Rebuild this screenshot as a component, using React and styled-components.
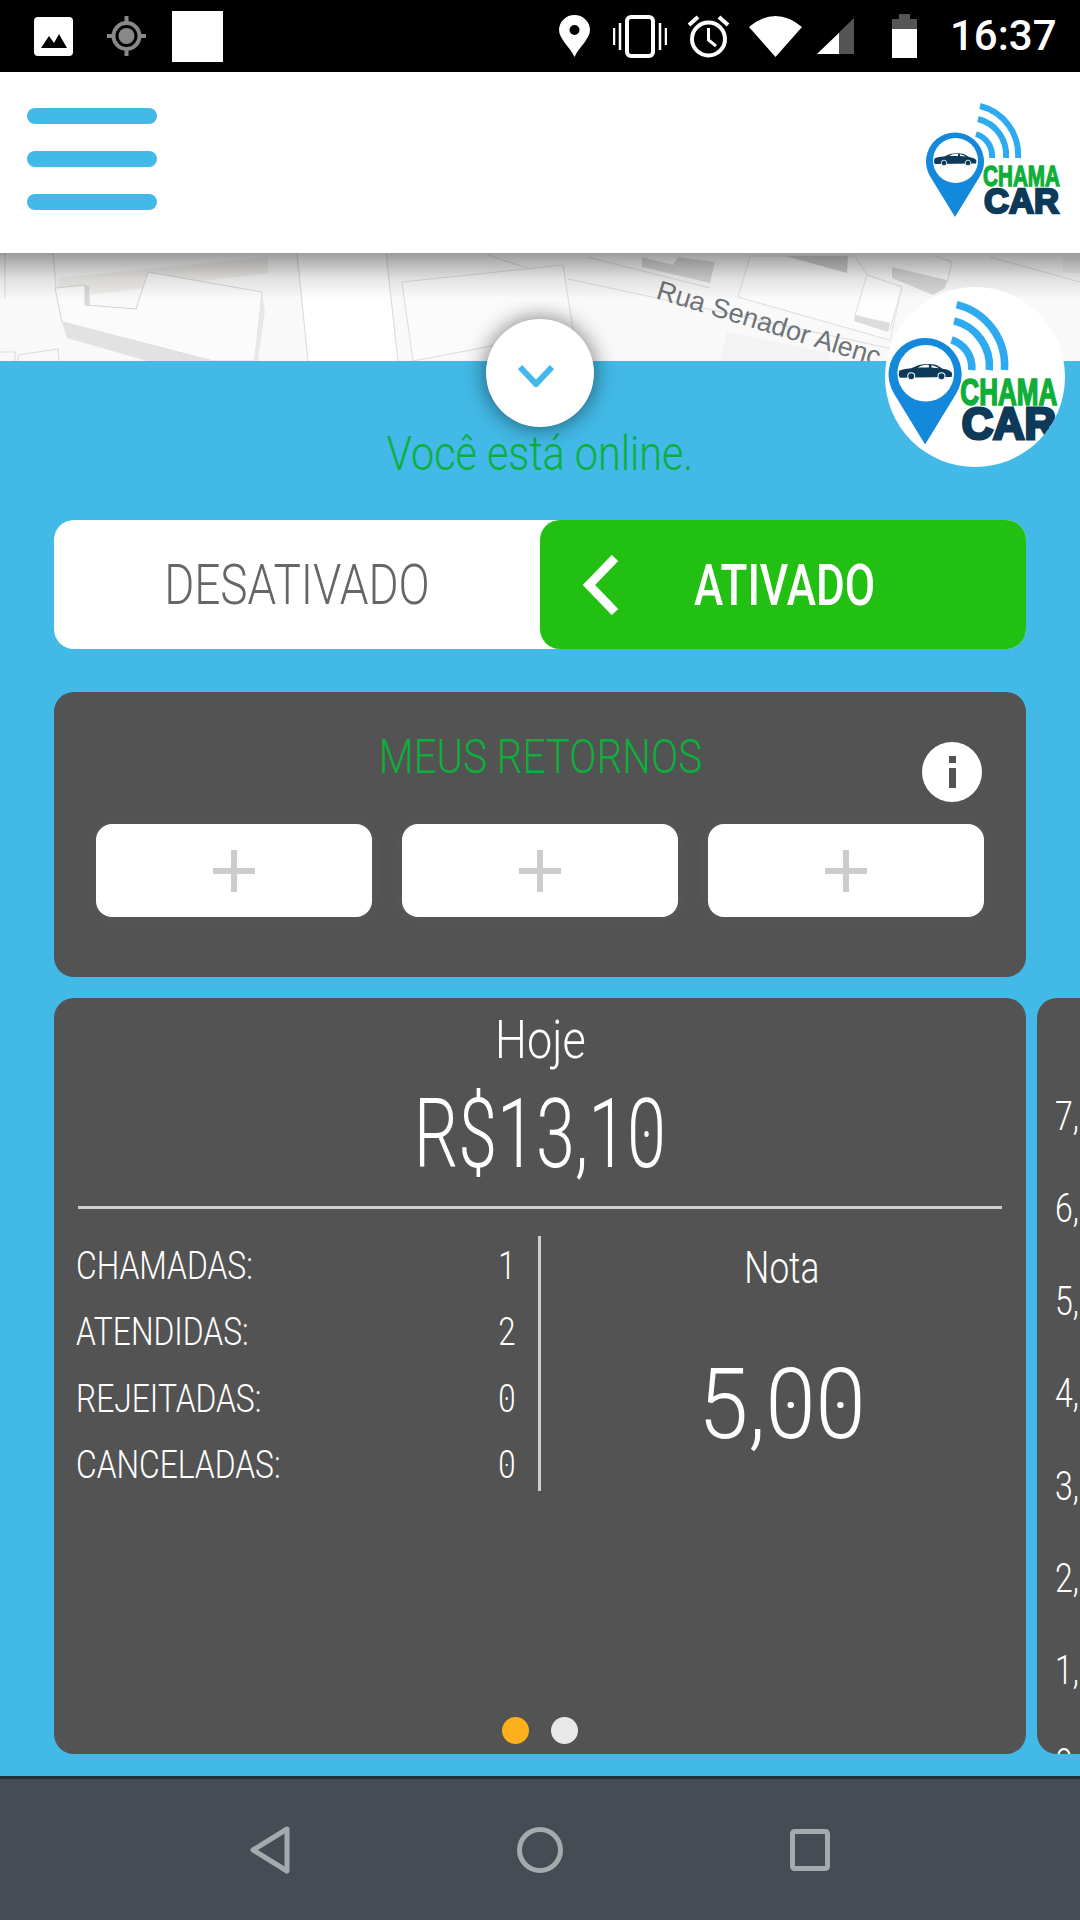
import React from "react";
import styled, { createGlobalStyle } from "styled-components";

const GlobalStyle = createGlobalStyle`
  html, body {
    margin: 0;
    padding: 0;
    background: #42b9e6;
    overflow: hidden;
  }
  * { box-sizing: border-box; }
`;

const Page = styled.div`
  width: 1080px;
  height: 1920px;
  display: flex;
  flex-direction: column;
  overflow: hidden;
  font-family: Roboto, "Liberation Sans", sans-serif;
  font-weight: 300;
`;

const StatusBar = styled.div`
  flex: 0 0 72px;
  background: #000;
  display: flex;
  align-items: center;
  justify-content: space-between;
  padding: 0 25px 0 34px;
`;

const StatusGroup = styled.div`
  display: flex;
  align-items: center;
`;

const StatusIcon = styled.svg`
  display: block;
  margin-left: ${(p) => p.$ml || 0}px;
`;

const BlankIcon = styled.div`
  width: 51px;
  height: 51px;
  margin-left: 26px;
  background: #fff;
`;

const Clock = styled.div`
  margin-left: 33px;
  width: 105px;
  color: #fff;
  font-size: 42px;
  font-weight: 500;
  line-height: 72px;
  white-space: nowrap;
`;

const Header = styled.header`
  flex: 0 0 181px;
  position: relative;
  z-index: 3;
  background: #fff;
  display: flex;
  align-items: flex-start;
  justify-content: space-between;
  padding: 28px 15px 0 27px;
`;

const Burger = styled.div`
  margin-top: 8px;
  width: 130px;
  display: flex;
  flex-direction: column;
  gap: 27px;
`;

const BurgerBar = styled.span`
  display: block;
  height: 16px;
  border-radius: 8px;
  background: #42b9e6;
`;

const MapStrip = styled.div`
  flex: 0 0 108px;
  position: relative;
  background: #f9f9f9;
  overflow: hidden;
  &::after {
    content: "";
    position: absolute;
    inset: 0 0 auto 0;
    height: 46px;
    background: linear-gradient(rgba(0, 0, 0, 0.38), rgba(0, 0, 0, 0.1) 55%, rgba(0, 0, 0, 0));
  }
`;

const MapSvg = styled.svg`
  display: block;
`;

const Panel = styled.main`
  flex: 1;
  position: relative;
  background: #42b9e6;
  padding: 0 54px;
`;

const Toggle = styled.button`
  position: absolute;
  z-index: 2;
  top: -42px;
  left: 486px;
  width: 108px;
  height: 108px;
  border: 0;
  padding: 6px 8px 0 0;
  border-radius: 50%;
  background: #fff;
  box-shadow: 0 0 22px rgba(0, 0, 0, 0.55);
  display: flex;
  align-items: center;
  justify-content: center;
`;

const Badge = styled.div`
  position: absolute;
  z-index: 2;
  top: -74px;
  left: 885px;
  width: 180px;
  height: 180px;
  border-radius: 50%;
  background: #fff;
  overflow: hidden;
`;

const BadgeLogo = styled.div`
  margin: 10px 0 0 -4px;
`;

const Cond = styled.span`
  display: inline-block;
  white-space: nowrap;
  transform: scaleX(${(p) => p.$sx || 0.78});
  transform-origin: ${(p) => p.$origin || "center"};
`;

// the app font has a dot inside its zeros
const Zero = styled.span`
  position: relative;
  display: inline-block;
  &::after {
    content: "";
    position: absolute;
    left: 50%;
    top: 50%;
    width: 0.07em;
    height: 0.07em;
    margin: -0.035em 0 0 -0.035em;
    border-radius: 50%;
    background: currentColor;
  }
`;

const OnlineText = styled.div`
  padding-top: 65px;
  height: 120px;
  line-height: 56px;
  text-align: center;
  color: #0eae3c;
  font-size: 49px;
  font-weight: 300;
`;

const Switch = styled.div`
  margin-top: 39px;
  height: 129px;
  border-radius: 20px;
  background: #fff;
  display: flex;
`;

const SwitchOff = styled.div`
  flex: 0 0 486px;
  display: flex;
  align-items: center;
  justify-content: center;
  color: #666;
  font-size: 56px;
`;

const SwitchOn = styled.div`
  flex: 0 0 486px;
  border-radius: 20px;
  background: #22c012;
  color: #fff;
  display: flex;
  align-items: center;
  padding-left: 43px;
  gap: 75px;
  font-size: 58px;
  font-weight: 500;
`;

const ReturnsCard = styled.section`
  position: relative;
  margin-top: 43px;
  height: 285px;
  border-radius: 20px;
  background: #535353;
  padding: 40px 42px 0;
`;

const ReturnsTitle = styled.div`
  line-height: 50px;
  text-align: center;
  color: #0eae3c;
  font-size: 48px;
`;

const InfoButton = styled.div`
  position: absolute;
  top: 50px;
  right: 44px;
  width: 60px;
  height: 60px;
  border-radius: 50%;
  background: #fff;
  display: flex;
  flex-direction: column;
  align-items: center;
  justify-content: center;
  gap: 5px;
`;

const InfoDot = styled.span`
  width: 7px;
  height: 7px;
  background: #535353;
`;

const InfoStem = styled.span`
  width: 7px;
  height: 20px;
  background: #535353;
`;

const SlotGrid = styled.div`
  margin-top: 42px;
  display: grid;
  grid-template-columns: repeat(3, 276px);
  gap: 30px;
`;

const Slot = styled.div`
  height: 93px;
  border-radius: 16px;
  background: #fff;
  box-shadow: 0 0 24px rgba(255, 255, 255, 0.04);
  display: flex;
  align-items: center;
  justify-content: center;
`;

const Carousel = styled.div`
  margin-top: 21px;
  display: flex;
  gap: 11px;
  height: 756px;
`;

const StatsCard = styled.section`
  position: relative;
  flex: 0 0 972px;
  border-radius: 20px;
  background: #535353;
  color: #fff;
  padding-top: 16px;
`;

const NextCard = styled.section`
  flex: 0 0 200px;
  border-radius: 20px;
  background: #535353;
  color: #fff;
  overflow: hidden;
  padding: 94px 0 0 18px;
  display: flex;
  flex-direction: column;
  gap: 42.4px;
`;

const NextValue = styled.div`
  flex: 0 0 50px;
  line-height: 50px;
  font-size: 40px;
`;

const DayLabel = styled.div`
  line-height: 52px;
  text-align: center;
  font-size: 53px;
`;

const Total = styled.div`
  margin-top: 23px;
  line-height: 90px;
  text-align: center;
  font-size: 96px;
`;

const Divider = styled.hr`
  margin: 27px 24px 0;
  border: 0;
  height: 3px;
  background: #cfcfcf;
`;

const StatsBody = styled.div`
  margin-top: 27px;
  height: 255px;
  display: flex;
`;

const StatsList = styled.div`
  margin: 0 22px;
  width: 440px;
  display: flex;
  flex-direction: column;
  gap: 7.5px;
`;

const StatsRow = styled.div`
  flex: 0 0 59px;
  display: flex;
  align-items: center;
  justify-content: space-between;
  font-size: 39px;
`;

const VLine = styled.div`
  width: 3px;
  background: #cfcfcf;
`;

const Rating = styled.div`
  flex: 1;
  text-align: center;
  padding-right: 4px;
`;

const RatingLabel = styled.div`
  line-height: 64px;
  font-size: 44px;
`;

const RatingValue = styled.div`
  margin-top: 55px;
  line-height: 100px;
  font-size: 98px;
`;

const Dots = styled.div`
  position: absolute;
  left: 0;
  right: 0;
  bottom: 10px;
  display: flex;
  justify-content: center;
  gap: 22px;
`;

const Dot = styled.span`
  width: 27px;
  height: 27px;
  border-radius: 50%;
  background: ${(p) => (p.$active ? "#fbb01c" : "#e8e8e8")};
`;

const NavBar = styled.nav`
  flex: 0 0 144px;
  background: #454c53;
  border-top: 3px solid #22303a;
  display: flex;
  align-items: center;
  padding: 0 0 0 250px;
`;

const NavIcon = styled.svg`
  display: block;
  margin-left: ${(p) => p.$ml || 0}px;
`;

const Logo = ({ scale = 1 }) => (
  <svg width={145 * scale} height={120 * scale} viewBox="0 0 145 120" style={{ display: "block" }}>
    <path d="M35 117 L10.5 77 A29 29 0 1 1 59.5 77 Z" fill="#1489dc" />
    <circle cx="35.5" cy="60.5" r="22.5" fill="#fff" />
    <path
      d="M14 62 L14.5 58.5 Q17 57 24 56.5 L30 54 Q38 52.5 44 54 L49 57 Q56 58 56.5 61 L56 63.5 L15 64 Z"
      fill="#0d3a59"
    />
    <path d="M29 56 L32 54.5 Q36 53.5 38 54 L38 56 Z M40 54.2 Q43 54.5 46 56.5 L40 56 Z" fill="#fff" />
    <circle cx="24" cy="63" r="2.8" fill="#0d3a59" stroke="#fff" strokeWidth="0.8" />
    <circle cx="48" cy="63" r="2.8" fill="#0d3a59" stroke="#fff" strokeWidth="0.8" />
    <g fill="none" stroke="#2eaaf0" strokeWidth="6">
      <path d="M56 34 A23 23 0 0 1 72 58" />
      <path d="M58 19 A37 37 0 0 1 86 58" />
      <path d="M60 6 A50 50 0 0 1 98 58" />
    </g>
    <text
      x="63"
      y="86"
      textLength="77"
      lengthAdjust="spacingAndGlyphs"
      fontFamily="Liberation Sans, sans-serif"
      fontWeight="700"
      fontSize="29"
      fill="#0fae38"
      stroke="#0fae38"
      strokeWidth="1.3"
    >
      CHAMA
    </text>
    <text
      x="64"
      y="113"
      textLength="75"
      lengthAdjust="spacingAndGlyphs"
      fontFamily="Liberation Sans, sans-serif"
      fontWeight="700"
      fontSize="35"
      fill="#0d3a59"
      stroke="#0d3a59"
      strokeWidth="2.4"
    >
      CAR
    </text>
  </svg>
);

const MapDrawing = () => (
  <MapSvg width="1080" height="108" viewBox="0 0 1080 108">
    <polygon points="297,0 386,0 398,108 308,108" fill="#fff" />
    <g fill="none" stroke="#dedede" strokeWidth="1.2">
      <path d="M297 0 L308 108 M386 0 L398 108" />
      <path d="M53 0 L56 35" />
      <path d="M5 0 L5 45" />
      <path d="M0 99 H15 V108 M18 108 V102 L58 96 L59 108" />
      <path d="M488 2 L563 27 M568 26 L893 96" />
      <path d="M587 4 L710 35 M738 44 L890 87" />
      <path d="M990 4 L1080 29" />
      <path d="M935 3 L952 9 L947 30" />
      <path d="M460 99 L487 94" />
    </g>
    <polygon points="57,25 268,4 268,20 88,42 85,34 58,34" fill="#efedea" />
    <polygon
      points="55,35 85,32 85,52 136,56 148,19 262,39 255,108 213,108 62,69"
      fill="#fbfbfb"
      stroke="#d4d4d4"
      strokeWidth="1"
    />
    <polygon points="85,32 89,33 90,52 85,52" fill="#d8d8d8" />
    <polygon points="62,69 213,108 147,108 67,85" fill="#e2e2e2" />
    <polygon points="262,39 265,57 258,108 254,108" fill="#e8e8e8" />
    <polygon points="402,29 563,12 573,77 460,99 413,108" fill="#fbfbfb" stroke="#dcdcdc" strokeWidth="1" />
    <polygon points="642,4 673,12 678,4 715,9 710,30 642,14" fill="#d8d8d8" />
    <polygon points="750,3 738,44 890,87 902,34 867,22 855,3" fill="#fbfbfb" stroke="#e2e2e2" />
    <polygon points="785,3 848,3 847,20" fill="#cfcfcf" />
    <polygon points="867,22 902,34 890,77 855,62" fill="#fdfdfd" stroke="#dedede" />
    <polygon points="855,62 890,70 888,79 854,68" fill="#dcdcdc" />
    <polygon points="892,14 947,27 945,35 933,42 892,25" fill="#d8d8d8" />
    <polygon points="727,79 830,100 830,108 720,108" fill="#f3f3f3" />
    <polygon points="1063,4 1080,4 1080,20 1063,20" fill="#f0f0f0" />
    <text
      x="655"
      y="45"
      transform="rotate(17 655 45)"
      fontFamily="Liberation Sans, sans-serif"
      fontSize="27"
      fill="#6e7378"
    >
      Rua Senador Alenc
    </text>
  </MapSvg>
);

const App = () => (
  <Page>
    <GlobalStyle />
    <StatusBar>
      <StatusGroup>
        <StatusIcon width="39" height="39" viewBox="0 0 39 39">
          <rect width="39" height="39" rx="4" fill="#fff" />
          <path d="M7 31 L15 19 L20 26 L25 17 L33 31 Z" fill="#000" />
        </StatusIcon>
        <StatusIcon $ml="34" width="39" height="40" viewBox="0 0 39 40">
          <g stroke="#888" fill="none">
            <circle cx="19.5" cy="20" r="13" strokeWidth="4" />
            <path d="M19.5 0 V7 M19.5 33 V40 M0 20 H7 M32 20 H39" strokeWidth="4" />
          </g>
          <circle cx="19.5" cy="20" r="8" fill="#888" />
        </StatusIcon>
        <BlankIcon />
      </StatusGroup>
      <StatusGroup>
        <StatusIcon width="31" height="42" viewBox="0 0 31 42">
          <path
            fillRule="evenodd"
            d="M15.5 42 C11 32 0 24 0 15 A15.5 15 0 0 1 31 15 C31 24 20 32 15.5 42 Z M15.5 10 A5 5 0 1 0 15.5 20 A5 5 0 1 0 15.5 10 Z"
            fill="#fff"
          />
        </StatusIcon>
        <StatusIcon $ml="23" width="54" height="43" viewBox="0 0 54 43">
          <rect x="14" y="2" width="26" height="39" rx="4" fill="none" stroke="#fff" strokeWidth="4" />
          <path d="M7 8 V35 M47 8 V35 M1 13 V30 M53 13 V30" stroke="#fff" strokeWidth="2.5" />
        </StatusIcon>
        <StatusIcon $ml="20" width="43" height="43" viewBox="0 0 43 43">
          <circle cx="21.5" cy="24" r="16.5" fill="none" stroke="#fff" strokeWidth="4" />
          <path d="M21.5 13 V25 L29 31" fill="none" stroke="#fff" strokeWidth="3" />
          <path d="M2 10 L11 2 M41 10 L32 2" stroke="#fff" strokeWidth="4" />
        </StatusIcon>
        <StatusIcon $ml="19" width="53" height="41" viewBox="0 0 53 41">
          <path d="M26.5 41 L0 11 Q26.5 -11 53 11 Z" fill="#fff" />
        </StatusIcon>
        <StatusIcon $ml="15" width="37" height="36" viewBox="0 0 37 36">
          <path d="M37 0 V36 H0 Z" fill="#555" />
          <path d="M22 15 V36 H0 Z" fill="#fff" />
        </StatusIcon>
        <StatusIcon $ml="38" width="25" height="44" viewBox="0 0 25 44">
          <path d="M7 0 H18 V5 H25 V15 H0 V5 H7 Z" fill="#555" />
          <rect y="15" width="25" height="29" fill="#fff" />
        </StatusIcon>
        <Clock>16:37</Clock>
      </StatusGroup>
    </StatusBar>

    <Header>
      <Burger>
        <BurgerBar />
        <BurgerBar />
        <BurgerBar />
      </Burger>
      <Logo />
    </Header>

    <MapStrip>
      <MapDrawing />
    </MapStrip>

    <Panel>
      <Toggle>
        <svg width="36" height="22" viewBox="0 0 36 22">
          <path d="M2 2 L18 19 L34 2" fill="none" stroke="#42b9e6" strokeWidth="6" />
        </svg>
      </Toggle>
      <Badge>
        <BadgeLogo>
          <Logo scale={1.26} />
        </BadgeLogo>
      </Badge>

      <OnlineText>
        <Cond $sx="0.843">Você está online.</Cond>
      </OnlineText>

      <Switch>
        <SwitchOff>
          <Cond $sx="0.82">DESATIVADO</Cond>
        </SwitchOff>
        <SwitchOn>
          <svg width="36" height="60" viewBox="0 0 36 60">
            <path d="M32 3 L6 30 L32 57" fill="none" stroke="#fff" strokeWidth="9" />
          </svg>
          <Cond $sx="0.76" $origin="left">ATIVADO</Cond>
        </SwitchOn>
      </Switch>

      <ReturnsCard>
        <ReturnsTitle>
          <Cond $sx="0.84">MEUS RETORNOS</Cond>
        </ReturnsTitle>
        <InfoButton>
          <InfoDot />
          <InfoStem />
        </InfoButton>
        <SlotGrid>
          {[0, 1, 2].map((i) => (
            <Slot key={i}>
              <svg width="42" height="42" viewBox="0 0 42 42">
                <path d="M21 0 V42 M0 21 H42" stroke="#ccc" strokeWidth="6" />
              </svg>
            </Slot>
          ))}
        </SlotGrid>
      </ReturnsCard>

      <Carousel>
        <StatsCard>
          <DayLabel>
            <Cond $sx="0.85">Hoje</Cond>
          </DayLabel>
          <Total>
            <Cond $sx="0.73">
              R$13,1<Zero>0</Zero>
            </Cond>
          </Total>
          <Divider />
          <StatsBody>
            <StatsList>
              <StatsRow>
                <Cond $sx="0.815" $origin="left">CHAMADAS:</Cond>
                <Cond $sx="0.8" $origin="right">1</Cond>
              </StatsRow>
              <StatsRow>
                <Cond $sx="0.815" $origin="left">ATENDIDAS:</Cond>
                <Cond $sx="0.8" $origin="right">2</Cond>
              </StatsRow>
              <StatsRow>
                <Cond $sx="0.815" $origin="left">REJEITADAS:</Cond>
                <Cond $sx="0.8" $origin="right"><Zero>0</Zero></Cond>
              </StatsRow>
              <StatsRow>
                <Cond $sx="0.815" $origin="left">CANCELADAS:</Cond>
                <Cond $sx="0.8" $origin="right"><Zero>0</Zero></Cond>
              </StatsRow>
            </StatsList>
            <VLine />
            <Rating>
              <RatingLabel>
                <Cond $sx="0.8">Nota</Cond>
              </RatingLabel>
              <RatingValue>
                <Cond $sx="0.92">
                  5,<Zero>0</Zero><Zero>0</Zero>
                </Cond>
              </RatingValue>
            </Rating>
          </StatsBody>
          <Dots>
            <Dot $active />
            <Dot />
          </Dots>
        </StatsCard>
        <NextCard>
          {["7,00", "6,00", "5,00", "4,00", "3,00", "2,00", "1,00", "0,00"].map((v) => (
            <NextValue key={v}>
              <Cond $sx="0.8" $origin="left">{v}</Cond>
            </NextValue>
          ))}
        </NextCard>
      </Carousel>
    </Panel>

    <NavBar>
      <NavIcon width="40" height="48" viewBox="0 0 40 48">
        <path d="M37 3 L3 24 L37 45 Z" fill="none" stroke="#a5aaad" strokeWidth="5" strokeLinejoin="round" />
      </NavIcon>
      <NavIcon $ml="227" width="46" height="46" viewBox="0 0 46 46">
        <circle cx="23" cy="23" r="20.5" fill="none" stroke="#a5aaad" strokeWidth="5" />
      </NavIcon>
      <NavIcon $ml="227" width="40" height="42" viewBox="0 0 40 42">
        <rect x="2.5" y="2.5" width="35" height="37" rx="2" fill="none" stroke="#a5aaad" strokeWidth="5" />
      </NavIcon>
    </NavBar>
  </Page>
);

export default App;
